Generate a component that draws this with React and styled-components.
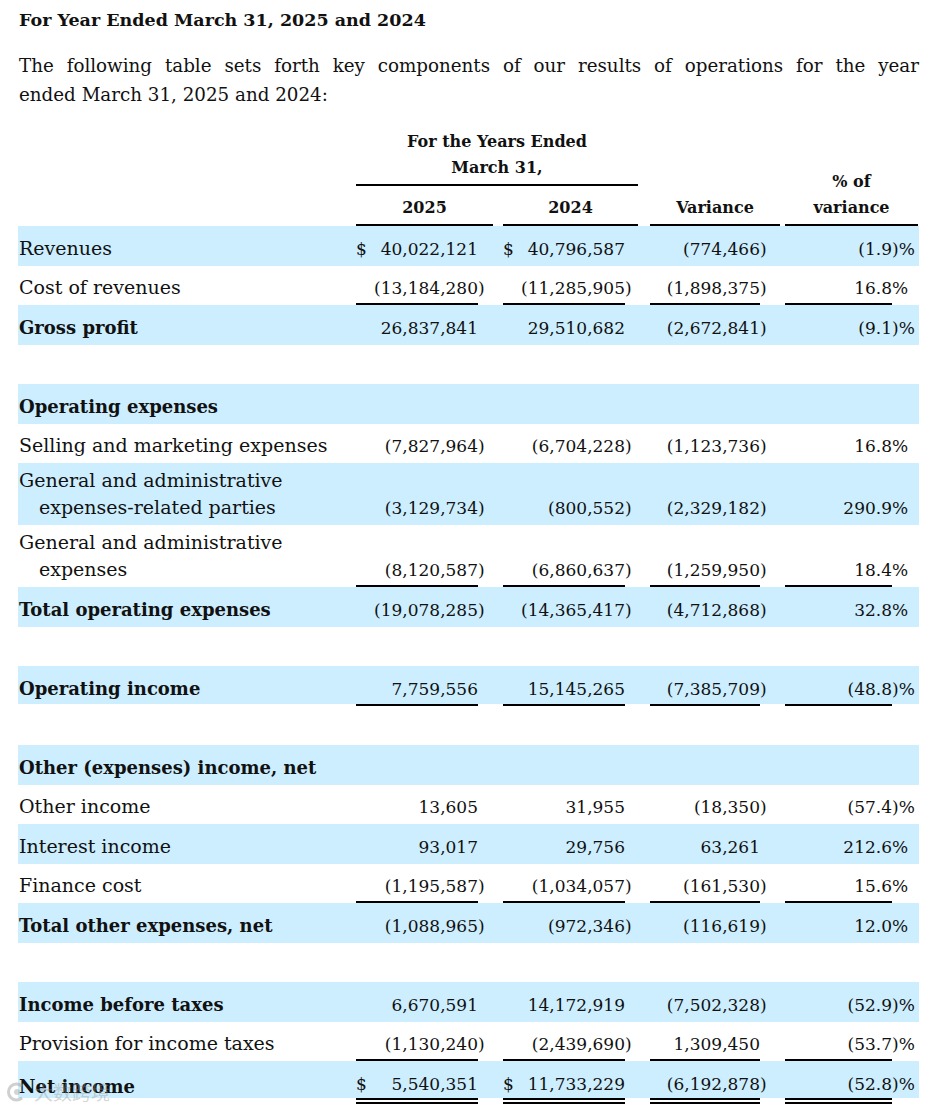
import React from "react";
import styled, { createGlobalStyle } from "styled-components";

const COLS = "338px 122px 15px 10px 122px 13px 12px 110px 20px 5px 107px 26px";
const BAND = "#cceeff";
const INK = "#111";

const Global = createGlobalStyle`
  body {
    margin: 0;
    background: #fff;
    color: ${INK};
    font-family: "DejaVu Serif", "Liberation Serif", serif;
  }
`;

const Page = styled.div`
  position: relative;
  width: 901px;
  padding: 6px 20px 2px 18px;
`;

const Title = styled.h3`
  margin: 0;
  font-size: 17.5px;
  font-weight: bold;
  line-height: 28px;
  padding-left: 1px;
`;

const Lead = styled.p`
  margin: 17px 0 0;
  font-size: 18.3px;
  line-height: 29px;
  padding-left: 1px;
`;

const LeadLine = styled.span`
  display: block;
  text-align: ${(p) => (p.$spread ? "justify" : "left")};
  text-align-last: ${(p) => (p.$spread ? "justify" : "left")};
`;

const Head = styled.div`
  display: grid;
  grid-template-columns: ${COLS};
  grid-template-rows: auto auto;
  margin-top: 20px;
  font-size: 16px;
  font-weight: bold;
  line-height: 26px;
  text-align: center;
`;

const HeadCell = styled.div`
  grid-column: ${(p) => p.$col};
  grid-row: ${(p) => p.$row};
  align-self: end;
  padding: ${(p) => p.$pad || "0 0 3px"};
  border-bottom: 2px solid #000;
`;

const Row = styled.div`
  display: grid;
  grid-template-columns: ${COLS};
  align-items: end;
  min-height: 39.5px;
  background: ${(p) =>
    p.$band
      ? `linear-gradient(${BAND}, ${BAND}) top left / 100% calc(100% - ${p.$gap}px) no-repeat`
      : "none"};
`;

const Label = styled.div`
  grid-column: 1;
  font-size: ${(p) => (p.$bold ? "18px" : "19px")};
  font-weight: ${(p) => (p.$bold ? "bold" : "normal")};
  line-height: 27.5px;
  padding: 3.5px 0 3.5px 21px;
  text-indent: -20px;
`;

const ruleStyle = (r) =>
  r === "double" ? "6px double #000" : r === "single" ? "2px solid #000" : "none";
const ruleSize = (r) => (r === "double" ? 6 : r === "single" ? 2 : 0);

const Amount = styled.div`
  grid-column: ${(p) => p.$col};
  display: flex;
  justify-content: space-between;
  font-size: 17px;
  line-height: 27px;
  padding: 9.5px 0 ${(p) => 3 - Math.min(ruleSize(p.$rule), 3)}px;
  border-bottom: ${(p) => ruleStyle(p.$rule)};
  white-space: nowrap;
`;

const Suffix = styled.div`
  grid-column: ${(p) => p.$col};
  font-size: 17px;
  line-height: 27px;
  padding: 9.5px 0 3px;
  margin-bottom: ${(p) => Math.max(ruleSize(p.$rule) - 3, 0)}px;
  white-space: nowrap;
`;

const Mark = styled.div`
  position: absolute;
  left: 6px;
  top: 1081px;
  display: flex;
  align-items: center;
  gap: 6px;
  color: rgba(150, 150, 150, 0.4);
  font-family: "Noto Sans CJK SC", sans-serif;
  font-size: 19px;
  line-height: 22px;
  pointer-events: none;
`;

const rows = [
  { label: "Revenues", band: true, vals: ["$40,022,121", "$40,796,587", "(774,466)", "(1.9)%"] },
  { label: "Cost of revenues", rule: "single", vals: ["(13,184,280)", "(11,285,905)", "(1,898,375)", "16.8%"] },
  { label: "Gross profit", bold: true, band: true, vals: ["26,837,841", "29,510,682", "(2,672,841)", "(9.1)%"] },
  { spacer: true },
  { label: "Operating expenses", bold: true, band: true },
  { label: "Selling and marketing expenses", vals: ["(7,827,964)", "(6,704,228)", "(1,123,736)", "16.8%"] },
  { label: "General and administrative expenses-related parties", band: true, vals: ["(3,129,734)", "(800,552)", "(2,329,182)", "290.9%"] },
  { label: "General and administrative expenses", rule: "single", vals: ["(8,120,587)", "(6,860,637)", "(1,259,950)", "18.4%"] },
  { label: "Total operating expenses", bold: true, band: true, vals: ["(19,078,285)", "(14,365,417)", "(4,712,868)", "32.8%"] },
  { spacer: true },
  { label: "Operating income", bold: true, band: true, rule: "single", vals: ["7,759,556", "15,145,265", "(7,385,709)", "(48.8)%"] },
  { spacer: true },
  { label: "Other (expenses) income, net", bold: true, band: true },
  { label: "Other income", vals: ["13,605", "31,955", "(18,350)", "(57.4)%"] },
  { label: "Interest income", band: true, vals: ["93,017", "29,756", "63,261", "212.6%"] },
  { label: "Finance cost", rule: "single", vals: ["(1,195,587)", "(1,034,057)", "(161,530)", "15.6%"] },
  { label: "Total other expenses, net", bold: true, band: true, vals: ["(1,088,965)", "(972,346)", "(116,619)", "12.0%"] },
  { spacer: true },
  { label: "Income before taxes", bold: true, band: true, vals: ["6,670,591", "14,172,919", "(7,502,328)", "(52.9)%"] },
  { label: "Provision for income taxes", rule: "single", vals: ["(1,130,240)", "(2,439,690)", "1,309,450", "(53.7)%"] },
  { label: "Net income", bold: true, band: true, rule: "double", vals: ["$5,540,351", "$11,733,229", "(6,192,878)", "(52.8)%"] },
];

const split = (v) => {
  let cur = "";
  let num = v;
  let suf = "";
  if (num.startsWith("$")) {
    cur = "$";
    num = num.slice(1);
  }
  const m = num.match(/(\)?%?)$/);
  if (m && m[1]) {
    suf = m[1];
    num = num.slice(0, -suf.length);
  }
  return { cur, num, suf };
};

const VALUE_COLS = [2, 5, 8, 11];

const Line = ({ row }) => {
  if (row.spacer) return <Row />;
  const gap = ruleSize(row.rule);
  return (
    <Row $band={row.band} $gap={gap}>
      <Label $bold={row.bold}>{row.label}</Label>
      {(row.vals || []).map((v, i) => {
        const { cur, num, suf } = split(v);
        const col = VALUE_COLS[i];
        return (
          <React.Fragment key={i}>
            <Amount $col={col} $rule={row.rule}>
              <span>{cur}</span>
              <span>{num}</span>
            </Amount>
            <Suffix $col={col + 1} $rule={row.rule}>
              {suf}
            </Suffix>
          </React.Fragment>
        );
      })}
    </Row>
  );
};

export default function App() {
  return (
    <Page>
      <Global />
      <Title>For Year Ended March 31, 2025 and 2024</Title>
      <Lead>
        <LeadLine $spread>
          The following table sets forth key components of our results of
          operations for the year
        </LeadLine>
        <LeadLine>ended March 31, 2025 and 2024:</LeadLine>
      </Lead>
      <Head>
        <HeadCell $col="2 / 7" $row="1">
          For the Years Ended
          <br />
          March 31,
        </HeadCell>
        <HeadCell $col="2 / 4" $row="2" $pad="9px 0 3px">
          2025
        </HeadCell>
        <HeadCell $col="5 / 7" $row="2" $pad="9px 0 3px">
          2024
        </HeadCell>
        <HeadCell $col="8 / 10" $row="1 / 3">
          Variance
        </HeadCell>
        <HeadCell $col="11 / 13" $row="1 / 3">
          % of
          <br />
          variance
        </HeadCell>
      </Head>
      {rows.map((row, i) => (
        <Line key={i} row={row} />
      ))}
      <Mark>
        <svg width="22" height="22" viewBox="0 0 22 22">
          <path
            d="M16 5.2A8 8 0 1 0 16 16.8"
            fill="none"
            stroke="rgba(150,150,150,0.45)"
            strokeWidth="3"
          />
          <circle cx="11" cy="11" r="3" fill="rgba(150,150,150,0.4)" />
        </svg>
        <span>大数跨境</span>
      </Mark>
    </Page>
  );
}
